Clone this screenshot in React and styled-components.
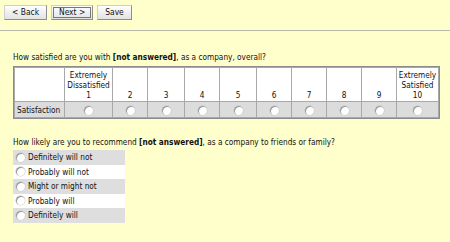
import React from 'react';
import styled, { createGlobalStyle } from 'styled-components';

const font = `'DejaVu Sans Condensed', 'DejaVu Sans', Verdana, sans-serif`;

const GlobalStyle = createGlobalStyle`
    html, body {
        margin: 0;
        padding: 0;
        background: #ffffcc;
    }
    body {
        font-family: ${font};
        font-stretch: condensed;
        font-size: 8.2px;
        color: #111;
    }
`;

const Page = styled.div`
    width: 450px;
    height: 242px;
    overflow: hidden;
    background: #ffffcc;
`;

const Toolbar = styled.div`
    display: flex;
    gap: 4px;
    padding: 5px 0 0 4px;
    height: 31px;
    box-sizing: border-box;
    border-bottom: 1px solid #b9b9ab;
`;

const Button = styled.button`
    font-family: ${font};
    font-stretch: condensed;
    font-size: 8.4px;
    height: 15px;
    padding: 0 7px;
    margin: 0;
    background: linear-gradient(#fefefe, #e2e2e2);
    border: 1px solid #cfcfcf;
    border-right-color: #8e8e8e;
    border-bottom-color: #8e8e8e;
    border-radius: 0;
    color: #111;
    line-height: 13px;
    outline: ${(p) => (p.$focused ? '1px solid #777' : 'none')};
    outline-offset: -3px;
`;

const Content = styled.div`
    padding: 20px 0 0 13px;
`;

const Question = styled.div`
    line-height: 12px;
    margin-bottom: ${(p) => p.$gap}px;
    white-space: nowrap;
`;

const Grid = styled.table`
    border-collapse: separate;
    border-spacing: 1px;
    background: #a8a8a8;
    border: 1px solid #8c8c8c;
    margin-bottom: 17px;
`;

const HeadCell = styled.td`
    background: #ffffff;
    text-align: center;
    vertical-align: bottom;
    height: 33px;
    padding: 0 1px 1px;
    width: ${(p) => p.$w}px;
    line-height: 10px;
    box-sizing: border-box;
`;

const RowLabel = styled.td`
    background: #dcdcdc;
    height: 15px;
    padding: 0 2px;
    text-align: left;
`;

const RadioCell = styled.td`
    background: #dcdcdc;
    text-align: center;
    height: 15px;
    padding: 0;
`;

const Radio = styled.span`
    display: inline-block;
    flex: none;
    width: 9px;
    height: 9px;
    border-radius: 50%;
    background: #fff;
    box-shadow: inset 1px 1px 0 #9a9a9a, 0 0 0 0.5px #c4c4c4;
    vertical-align: middle;
`;

const Options = styled.div`
    display: flex;
    flex-direction: column;
    width: 112px;
`;

const Option = styled.label`
    display: flex;
    align-items: center;
    gap: 3px;
    height: 14.5px;
    padding-left: 3px;
    background: ${(p) => (p.$odd ? '#ffffff' : '#dedede')};
    white-space: nowrap;
`;

const columns = [
    { label: 'Extremely Dissatisfied', num: 1, w: 47 },
    { num: 2, w: 34 },
    { num: 3, w: 36 },
    { num: 4, w: 34 },
    { num: 5, w: 36 },
    { num: 6, w: 34 },
    { num: 7, w: 34 },
    { num: 8, w: 34 },
    { num: 9, w: 34 },
    { label: 'Extremely Satisfied', num: 10, w: 41 },
];

const choices = [
    'Definitely will not',
    'Probably will not',
    'Might or might not',
    'Probably will',
    'Definitely will',
];

export default function App() {
    return (
        <Page>
            <GlobalStyle />
            <Toolbar>
                <Button>&lt; Back</Button>
                <Button $focused>Next &gt;</Button>
                <Button>Save</Button>
            </Toolbar>
            <Content>
                <Question $gap={3}>
                    How satisfied are you with <b>[not answered]</b>, as a company, overall?
                </Question>
                <Grid>
                    <tbody>
                        <tr>
                            <HeadCell $w={49} />
                            {columns.map((c) => (
                                <HeadCell key={c.num} $w={c.w}>
                                    {c.label &&
                                        c.label.split(' ').map((word) => (
                                            <div key={word}>{word}</div>
                                        ))}
                                    <div>{c.num}</div>
                                </HeadCell>
                            ))}
                        </tr>
                        <tr>
                            <RowLabel>Satisfaction</RowLabel>
                            {columns.map((c) => (
                                <RadioCell key={c.num}>
                                    <Radio />
                                </RadioCell>
                            ))}
                        </tr>
                    </tbody>
                </Grid>
                <Question $gap={2}>
                    How likely are you to recommend <b>[not answered]</b>, as a company to friends or family?
                </Question>
                <Options>
                    {choices.map((c, i) => (
                        <Option key={c} $odd={i % 2 === 1}>
                            <Radio />
                            {c}
                        </Option>
                    ))}
                </Options>
            </Content>
        </Page>
    );
}
